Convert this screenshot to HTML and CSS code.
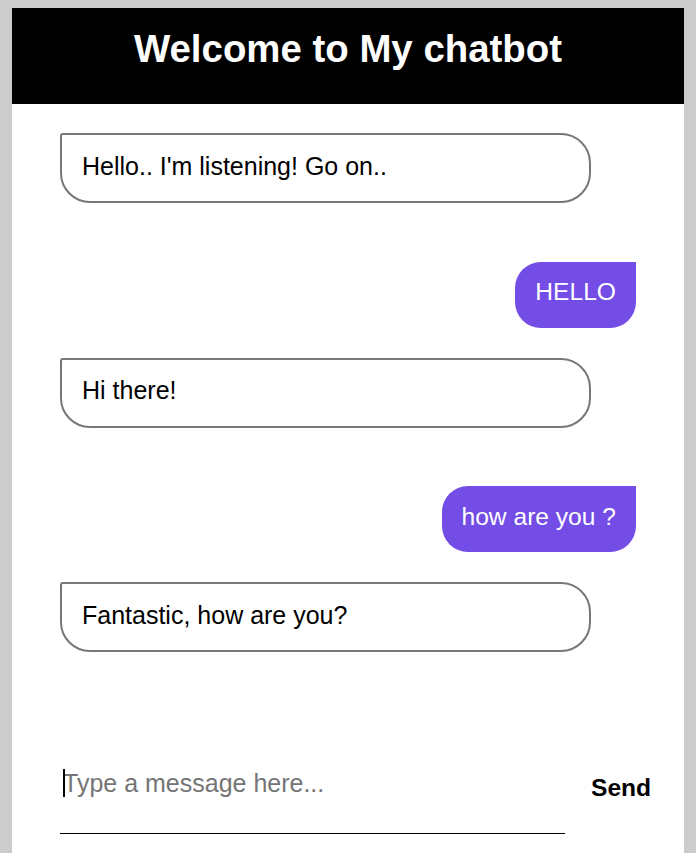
FILE: index.html
```html
<!DOCTYPE html>
<html lang="en">
<head>
<meta charset="utf-8">
<title>My chatbot</title>
<link rel="stylesheet" href="styles.css">
</head>
<body>
<div class="app">
  <header class="header">
    <h1 class="title">Welcome to My chatbot</h1>
  </header>
  <main class="messages">
    <div class="msg bot">Hello.. I'm listening! Go on..</div>
    <div class="msg user">HELLO</div>
    <div class="msg bot">Hi there!</div>
    <div class="msg user">how are you ?</div>
    <div class="msg bot">Fantastic, how are you?</div>
  </main>
  <form class="composer">
    <div class="field">
      <input class="input" type="text" placeholder="Type a message here..." autofocus>
      <span class="caret" aria-hidden="true"></span>
    </div>
    <button class="send" type="button">Send</button>
  </form>
</div>
</body>
</html>
```
FILE: styles.css
```css
html, body {
  margin: 0;
  padding: 0;
}
body {
  background: #cccccc;
  font-family: "Liberation Sans", Arial, sans-serif;
}
.app {
  margin: 8px 12px 0;
  background: #ffffff;
  min-height: 845px;
}
.header {
  background: #000000;
  height: 96px;
  box-sizing: border-box;
  padding-top: 19px;
}
.title {
  margin: 0;
  color: #ffffff;
  text-align: center;
  font-size: 38.4px;
  line-height: 44px;
  font-weight: bold;
}
.messages {
  display: flex;
  flex-direction: column;
  padding: 29px 48px 22.5px;
}
.msg {
  box-sizing: border-box;
  font-size: 24.6px;
  line-height: 30px;
  padding: 15.5px 20px 20.5px;
}
.bot {
  width: 531px;
  font-size: 25px;
  border: 2px solid #777777;
  border-radius: 3px 30px 30px 30px;
  color: #000000;
  background: #ffffff;
  margin-bottom: 58.5px;
}
.user {
  align-self: flex-end;
  background: #744ce6;
  color: #ffffff;
  border-radius: 26px 0 26px 26px;
  margin-bottom: 30px;
}
.composer {
  display: flex;
  align-items: flex-start;
  padding: 0 0 0 48px;
  margin: 0;
}
.field {
  position: relative;
}
.input {
  display: block;
  width: 505px;
  box-sizing: border-box;
  border: none;
  border-bottom: 1px solid #000000;
  outline: none;
  padding: 36px 3px 35px;
  font-family: "Liberation Sans", Arial, sans-serif;
  font-size: 25px;
  line-height: 29px;
  height: 101px;
  color: #000000;
  background: transparent;
  caret-color: transparent;
}
.input::placeholder {
  color: #757575;
}
.caret {
  position: absolute;
  left: 3px;
  top: 36px;
  width: 2px;
  height: 28px;
  background: #000000;
}
.send {
  margin: 40px 0 0 26px;
  padding: 0;
  border: none;
  background: transparent;
  font-family: "Liberation Sans", Arial, sans-serif;
  font-size: 24.6px;
  line-height: 29px;
  font-weight: bold;
  color: #000000;
}
```
